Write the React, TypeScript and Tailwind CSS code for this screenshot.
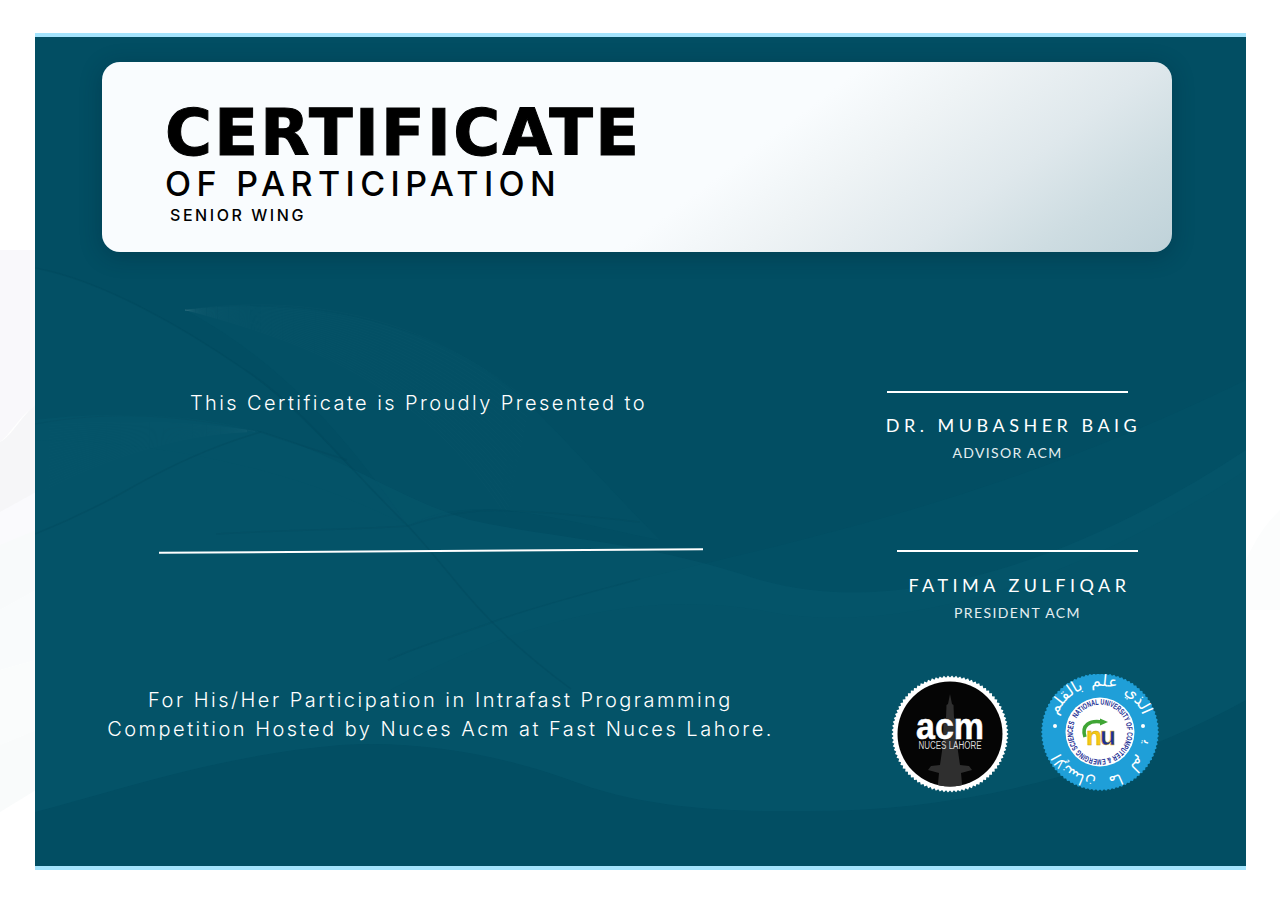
import React from "react";

// toothed outline for the two round seals
const serrated = (cx: number, cy: number, outer: number, inner: number, teeth: number) => {
    const pts: string[] = [];
    for (let i = 0; i < teeth * 2; i++) {
        const r = i % 2 === 0 ? outer : inner;
        const a = (Math.PI * i) / teeth;
        pts.push(`${(cx + r * Math.cos(a)).toFixed(2)},${(cy + r * Math.sin(a)).toFixed(2)}`);
    }
    return pts.join(" ");
};

const AcmSeal = () => (
    <svg width="120" height="120" viewBox="0 0 120 120" className="shrink-0">
        <defs>
            <clipPath id="acmClip">
                <circle cx="60" cy="60" r="52.5" />
            </clipPath>
        </defs>
        <polygon points={serrated(60, 60, 58.5, 56.5, 90)} fill="#ffffff" />
        <circle cx="60" cy="60" r="52.5" fill="#050505" />
        <g clipPath="url(#acmClip)" fill="#2f2f2f">
            <path d="M60 20 L62 30 L63.5 31 L64 44 L66.5 46 L67 70 L70 91 L79 92 L82 96 L71 99 L73 120 L47 120 L49 99 L38 96 L41 92 L50 91 L53 70 L53.5 46 L56 44 L56.5 31 L58 30 Z" />
        </g>
        <text x="60" y="65" textAnchor="middle" fill="#ffffff" stroke="#ffffff" strokeWidth="0.5" fontSize="36" fontWeight="700" fontFamily="'Liberation Sans', sans-serif" textLength="68" lengthAdjust="spacingAndGlyphs">acm</text>
        <text x="60" y="74.5" textAnchor="middle" fill="#d9d9d9" fontSize="10" fontFamily="'Liberation Sans', sans-serif" textLength="63" lengthAdjust="spacingAndGlyphs">NUCES LAHORE</text>
    </svg>
);

const FastSeal = () => (
    <svg width="120" height="120" viewBox="0 0 120 120" className="shrink-0">
        <defs>
            <path id="fastInner" d="M36.62 44.5 A27 27 0 1 1 83.38 71.5 A27 27 0 1 1 36.62 44.5" />
            <path id="arabicTop" d="M14 58 A 46 46 0 0 1 106 58" />
            <path id="arabicBottom" d="M104 66 A 44.5 44.5 0 0 1 16 66" />
        </defs>
        <polygon points={serrated(60, 58, 59, 57.5, 90)} fill="#1f9fd8" />
        <circle cx="60" cy="58" r="34.5" fill="#ffffff" />
        <text fontSize="8" fontWeight="700" fill="#1c2f94" fontFamily="'Liberation Sans', sans-serif">
            <textPath href="#fastInner" textLength="166" lengthAdjust="spacingAndGlyphs">NATIONAL UNIVERSITY OF COMPUTER &amp; EMERGING SCIENCES</textPath>
        </text>
        <text fontSize="16" fill="#ffffff" textAnchor="middle" wordSpacing="3" fontFamily="'DejaVu Sans', sans-serif">
            <textPath href="#arabicTop" startOffset="50%">الذي علم بالقلم</textPath>
        </text>
        <text fontSize="15" fill="#ffffff" textAnchor="middle" wordSpacing="7" fontFamily="'DejaVu Sans', sans-serif">
            <textPath href="#arabicBottom" startOffset="50%">علم الإنسان ما لم يعلم</textPath>
        </text>
        <circle cx="15" cy="52" r="2" fill="#ffffff" />
        <circle cx="103" cy="52" r="2" fill="#ffffff" />
        <path d="M45 63 C41 51 50 46 62 48" fill="none" stroke="#3fa535" strokeWidth="3.5" />
        <path d="M60 44.5 L68 48 L60 51.5 Z" fill="#3fa535" />
        <text x="46" y="71" fontSize="26" fontWeight="700" fill="#f6c915" stroke="#c9a012" strokeWidth="0.4" fontFamily="'Liberation Sans', sans-serif">n</text>
        <text x="60" y="71" fontSize="26" fontWeight="700" fill="#1c2f94" stroke="#f6c915" strokeWidth="0.5" fontFamily="'Liberation Sans', sans-serif">u</text>
    </svg>
);

const CardWaves = () => (
    <svg viewBox="35 37 1211 829" preserveAspectRatio="none" className="absolute inset-0 w-full h-full pointer-events-none">
        {/* broad lighter swell through the middle */}
        <path d="M35 420 C100 412 190 412 261 432 C340 455 400 500 470 520 C560 540 640 540 760 580 C900 620 1080 560 1246 450 L1246 700 C1100 780 950 812 800 811 C720 812 640 807 570 780 C500 755 420 740 340 745 C220 755 120 790 35 812 Z" fill="#06566b" opacity="0.7" />
        <path d="M35 268 C100 280 180 325 245 370 C300 410 350 470 408 526 C300 470 160 440 35 440 Z" fill="#06546a" opacity="0.4" />
        <path d="M185 310 C300 296 440 318 530 405 C580 455 620 500 660 540 C560 520 470 490 408 526 C350 440 280 360 185 310 Z" fill="#06566b" opacity="0.3" />
        <path d="M390 660 C470 625 560 600 640 579 C800 540 1000 500 1246 380 L1246 470 C1080 580 900 640 760 610 C640 590 520 620 390 690 Z" fill="#0a5d72" opacity="0.15" />
        <path d="M35 268 C100 280 180 325 245 370 C300 405 350 470 408 526 C440 560 460 590 490 620 C520 650 545 670 571 689" fill="none" stroke="#02465a" strokeWidth="1.5" opacity="0.3" />
        <path d="M35 534 C70 520 100 505 122 493 C170 465 215 445 261 432 C300 445 330 455 347 460" fill="none" stroke="#02465a" strokeWidth="1.5" opacity="0.3" />
        <path d="M35 424 C100 412 170 412 261 432" fill="none" stroke="#03485c" strokeWidth="1" opacity="0.2" />
        <path d="M388 660 C420 645 460 635 498 620 C550 602 600 590 640 579" fill="none" stroke="#03475b" strokeWidth="1.5" opacity="0.25" />
        <path d="M216 534 C280 530 350 530 408 526 C440 515 480 508 510 511 C560 512 600 518 640 522" fill="none" stroke="#03475b" strokeWidth="1.5" opacity="0.25" />
        {Array.from({ length: 24 }).map((_, i) => (
            <path key={i} d={`M185 310 C300 ${294 + i * 2} 420 ${312 + i * 3} ${530 - i} ${402 + i * 5}`} fill="none" stroke="#ffffff" strokeWidth="0.5" opacity="0.025" />
        ))}
        {Array.from({ length: 24 }).map((_, i) => (
            <path key={i} d={`M35 ${426 + i * 3} C110 ${420 + i * 1.5} 190 ${420 + i * 0.5} 261 432`} fill="none" stroke="#ffffff" strokeWidth="0.5" opacity="0.02" />
        ))}
    </svg>
);

// the pale sheet that shows on both sides of the card
const PageWaves = () => (
    <svg viewBox="0 0 1280 904" className="absolute inset-0 w-full h-full pointer-events-none">
        <path d="M0 250 L36 250 L36 405 C20 415 10 435 0 442 Z" fill="#f9f8fb" />
        <path d="M0 442 C12 436 24 412 36 405 L36 500 L0 512 Z" fill="#f6f6f8" />
        <path d="M0 512 L36 492 L36 575 L0 545 Z" fill="#fafafd" />
        <path d="M0 545 L36 530 L36 590 L0 610 Z" fill="#f8fafb" />
        <path d="M0 610 L36 590 L36 660 L0 670 Z" fill="#f9fbfc" />
        <path d="M0 670 L36 660 L36 730 L0 745 Z" fill="#fafcfc" />
        <path d="M0 745 L36 730 L36 790 L0 812 Z" fill="#f9fbfb" />
        <path d="M1246 560 C1260 530 1270 520 1280 510 L1280 610 L1246 610 Z" fill="#fcfdfd" />
    </svg>
);

export default function App() {
    return (
        <div className="relative w-[1280px] h-[904px] bg-white overflow-hidden font-['Inter',sans-serif]">
            <PageWaves />
            <div className="relative pt-[33px] pl-[35px]">
                <div className="relative w-[1211px] h-[837px] bg-[#024e63] border-t-4 border-b-4 border-[#a4e4fd] overflow-hidden">
                    <CardWaves />

                    <div className="relative flex flex-col">
                        {/* heading panel */}
                        <div className="ml-[67px] mt-[25px] w-[1070px] h-[190px] rounded-[18px] bg-[linear-gradient(143deg,#f9fcfe_58%,#eef3f5_68%,#dfe8ec_80%,#cddce1_90%,#bfd2d9_100%)] shadow-[0_4px_22px_rgba(0,30,45,0.3)] pl-[63px] pt-[36px] text-black">
                            <h1 className="font-['DejaVu_Sans',sans-serif] text-[64px] leading-[70px] font-bold tracking-[2.3px] [-webkit-text-stroke:1px_black] whitespace-nowrap">CERTIFICATE</h1>
                            <h2 className="-mt-[3px] -ml-[0px] text-[34px] leading-[38px] font-medium tracking-[5.4px] whitespace-nowrap">OF PARTICIPATION</h2>
                            <p className="mt-[2px] ml-[5px] text-[16px] leading-[20px] font-medium tracking-[0.16em] whitespace-nowrap">SENIOR WING</p>
                        </div>

                        <div className="flex">
                            {/* left column */}
                            <div className="w-[852px] shrink-0 flex flex-col text-white font-light">
                                <p className="mt-[136px] ml-[155px] text-[20px] leading-[30px] tracking-[0.12em] whitespace-nowrap">This Certificate is Proudly Presented to</p>
                                <div className="mt-[132px] ml-[124px] w-[544px] h-[2px] bg-white -rotate-[0.37deg]" />
                                <div className="mt-[134px] ml-[72px] w-[667px] flex flex-col items-center text-[20px] leading-[29px] tracking-[0.125em] whitespace-nowrap">
                                    <p>For His/Her Participation in Intrafast Programming</p>
                                    <p>Competition Hosted by Nuces Acm at Fast Nuces Lahore.</p>
                                </div>
                            </div>

                            {/* signatures and seals */}
                            <div className="flex flex-col text-white font-['Lato',sans-serif]">
                                <div className="mt-[139px] w-[241px] h-[2px] bg-white" />
                                <div className="w-[241px] flex flex-col items-center">
                                    <p className="mt-[20px] ml-[12px] text-[18px] leading-[24px] tracking-[0.25em] whitespace-nowrap">DR. MUBASHER BAIG</p>
                                    <p className="mt-[7px] text-[14px] leading-[18px] tracking-[0.095em] text-[#e4eef1] whitespace-nowrap">ADVISOR ACM</p>
                                </div>
                                <div className="ml-[10px] mt-[88px] w-[241px] h-[2px] bg-white" />
                                <div className="ml-[10px] w-[241px] flex flex-col items-center">
                                    <p className="mt-[21px] ml-[4px] text-[18px] leading-[24px] tracking-[0.25em] whitespace-nowrap">FATIMA ZULFIQAR</p>
                                    <p className="mt-[7px] text-[14px] leading-[18px] tracking-[0.1em] text-[#e4eef1] whitespace-nowrap">PRESIDENT ACM</p>
                                </div>
                                <div className="mt-[52px] ml-[3px] flex gap-[30px]">
                                    <AcmSeal />
                                    <FastSeal />
                                </div>
                            </div>
                        </div>
                    </div>
                </div>
            </div>
        </div>
    );
}
